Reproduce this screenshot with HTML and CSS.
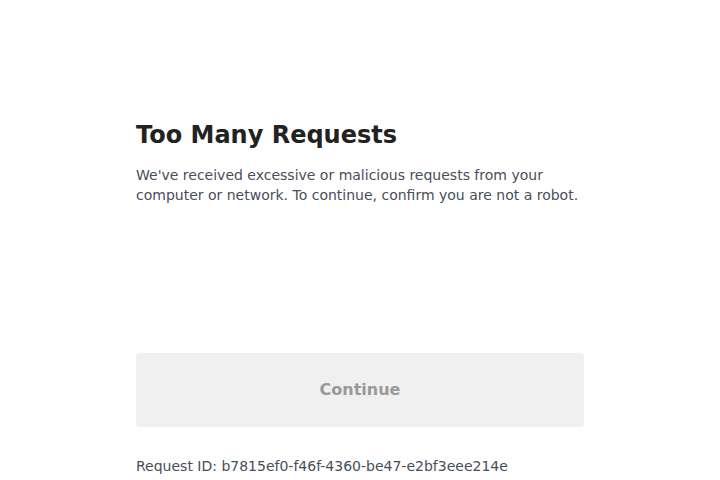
FILE: index.html
```html
<!DOCTYPE html>
<html lang="en">
<head>
<meta charset="utf-8">
<title>Too Many Requests</title>
<link rel="stylesheet" href="styles.css">
</head>
<body>
<main class="page">
  <h1 class="title">Too Many Requests</h1>
  <p class="message">We've received excessive or malicious requests from your computer or network. To continue, confirm you are not a robot.</p>
  <div class="challenge"></div>
  <button class="continue" type="button" disabled>Continue</button>
  <p class="request-id">Request ID: b7815ef0-f46f-4360-be47-e2bf3eee214e</p>
</main>
</body>
</html>
```

FILE: styles.css
```css
html, body {
  margin: 0;
  padding: 0;
  background: #ffffff;
}

body {
  font-family: "DejaVu Sans", sans-serif;
}

.page {
  width: 448px;
  margin: 0 auto;
  padding-top: 119px;
  display: flex;
  flex-direction: column;
}

.title {
  margin: 0;
  font-size: 24px;
  line-height: 32px;
  font-weight: bold;
  color: #222222;
}

.message {
  margin: 14px 0 0;
  font-size: 14px;
  line-height: 20px;
  color: #474e5a;
}

.challenge {
  height: 148px;
}

.continue {
  height: 74px;
  width: 100%;
  border: none;
  border-radius: 4px;
  background: #f0f0f0;
  color: #999999;
  font-family: "DejaVu Sans", sans-serif;
  font-size: 16px;
  font-weight: bold;
  padding: 0 0 2px;
}

.request-id {
  margin: 29px 0 0;
  font-size: 14px;
  line-height: 20px;
  color: #474e5a;
}
```
